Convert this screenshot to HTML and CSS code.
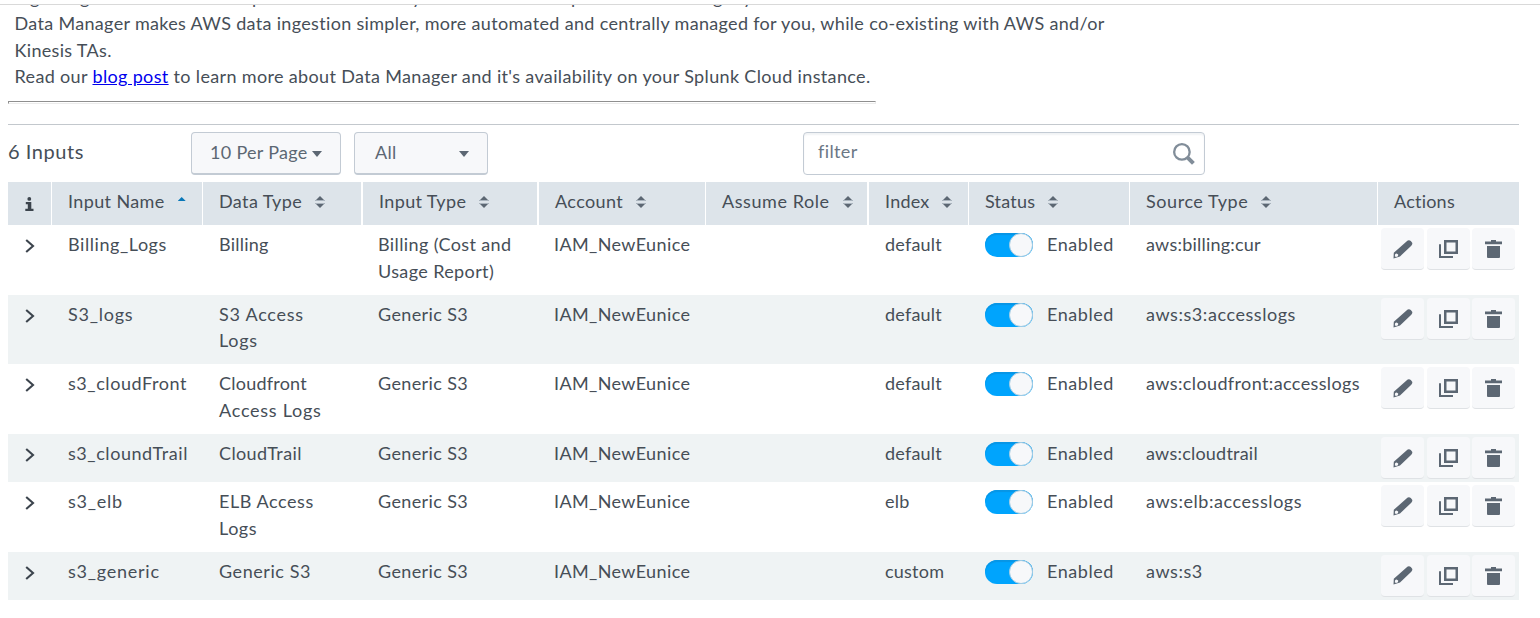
FILE: index.html
```
<!DOCTYPE html>
<html lang="en">
<head>
<meta charset="utf-8">
<title>Inputs</title>
<link rel="stylesheet" href="styles.css">
</head>
<body>
<svg class="defs" aria-hidden="true">
  <symbol id="sort" viewBox="0 0 10 12"><path d="M5 0 9 4H1zM5 12 9 8H1z" fill="#5c6773"/><path d="M0 4.500H10M0 7.500H10" stroke="#a9b3bd"/></symbol>
  <symbol id="chev" viewBox="0 0 10 14"><path d="M1.200 1 8 7 1.200 13" fill="none" stroke="#3c444d" stroke-width="2.100"/></symbol>
  <symbol id="pencil" viewBox="0 0 20 19"><path d="M13.500 1.400C15 .1 16.500-.1 17.800 1.100L18.600 1.900C19.800 3.100 19.500 4.500 18.300 5.800L7 16.400 .5 18.500 .8 12.800ZM2.200 14 1.800 16.200 3 17 5 16.200 5.200 14.400 3.600 13.600Z" fill="#5c6773" fill-rule="evenodd"/></symbol>
  <symbol id="clone" viewBox="0 0 19 18"><path d="M6.250 1.250H17.750V12.750H6.250Z" fill="none" stroke="#5c6773" stroke-width="2.500"/><path d="M1 4.300V17H14" fill="none" stroke="#5c6773" stroke-width="2"/></symbol>
  <symbol id="trash" viewBox="0 0 17 18"><path d="M0 1.600H6V0H11V1.600H17V4.300H0zM2 6H15V17a1 1 0 0 1-1 1H3a1 1 0 0 1-1-1z" fill="#5c6773"/></symbol>
</svg>
<header class="topbar"></header>
<div class="clip" aria-hidden="true"><i>g</i><i>g</i><i>p</i><i>y</i><i>p</i><i>g</i><i>y</i></div>
<main class="page">
  <section class="intro">
    <p class="l1">Data Manager makes AWS data ingestion simpler, more automated and centrally managed for you, while co-existing with AWS and/or</p>
    <p class="l2">Kinesis TAs.</p>
    <p class="l3">Read our <a href="#">blog post</a> to learn more about Data Manager and it's availability on your Splunk Cloud instance.</p>
  </section>
  <div class="rule"></div>
  <div class="toolbar">
    <h2 class="count">6 Inputs</h2>
    <button class="drop per">10 Per Page<i class="caret"></i></button>
    <button class="drop all">All<i class="caret"></i></button>
    <label class="filter"><span>filter</span>
      <svg width="22" height="22" viewBox="0 0 21 21"><circle cx="8.500" cy="8.500" r="7.400" fill="none" stroke="#818d99" stroke-width="2.200"/><path d="M13.300 13.300 19.500 19.500" stroke="#818d99" stroke-width="3.800"/></svg>
    </label>
  </div>
  <div class="table">
    <div class="row head">
      <div class="cell info"><svg width="9" height="14" viewBox="0 0 9 14"><circle cx="4.300" cy="1.900" r="1.900" fill="#3c444d"/><path d="M.8 5H6.300V11.800H8.500V14H.3V11.800H2.800V7.200H.8z" fill="#3c444d"/></svg></div>
      <div class="cell">Input Name<i class="asc"></i></div>
      <div class="cell">Data Type<svg class="sort"><use href="#sort"/></svg></div>
      <div class="cell wide">Input Type<svg class="sort"><use href="#sort"/></svg></div>
      <div class="cell wide">Account<svg class="sort"><use href="#sort"/></svg></div>
      <div class="cell loose">Assume Role<svg class="sort"><use href="#sort"/></svg></div>
      <div class="cell wide tight">Index<svg class="sort"><use href="#sort"/></svg></div>
      <div class="cell tight">Status<svg class="sort"><use href="#sort"/></svg></div>
      <div class="cell loose">Source Type<svg class="sort"><use href="#sort"/></svg></div>
      <div class="cell tight">Actions</div>
    </div>
    <div class="row">
      <div class="cell"><svg class="chev"><use href="#chev"/></svg></div>
      <div class="cell loose">Billing_Logs</div><div class="cell tight">Billing</div><div class="cell nudge">Billing (Cost and<br>Usage Report)</div><div class="cell nudge">IAM_NewEunice</div><div class="cell"></div><div class="cell tight">default</div>
      <div class="cell status loose"><span class="toggle"></span>Enabled</div><div class="cell tight">aws:billing:cur</div>
      <div class="actions"><button><svg class="pencil"><use href="#pencil"/></svg></button><button><svg class="clone"><use href="#clone"/></svg></button><button><svg class="trash"><use href="#trash"/></svg></button></div>
    </div>
    <div class="row alt">
      <div class="cell"><svg class="chev"><use href="#chev"/></svg></div>
      <div class="cell looser">S3_logs</div><div class="cell looser">S3 Access<br>Logs</div><div class="cell nudge">Generic S3</div><div class="cell nudge">IAM_NewEunice</div><div class="cell"></div><div class="cell tight">default</div>
      <div class="cell status loose"><span class="toggle"></span>Enabled</div><div class="cell loose">aws:s3:accesslogs</div>
      <div class="actions"><button><svg class="pencil"><use href="#pencil"/></svg></button><button><svg class="clone"><use href="#clone"/></svg></button><button><svg class="trash"><use href="#trash"/></svg></button></div>
    </div>
    <div class="row">
      <div class="cell"><svg class="chev"><use href="#chev"/></svg></div>
      <div class="cell loose">s3_cloudFront</div><div class="cell"><span class="tight">Cloudfront</span><br><span class="looser">Access Logs</span></div><div class="cell nudge">Generic S3</div><div class="cell nudge">IAM_NewEunice</div><div class="cell"></div><div class="cell tight">default</div>
      <div class="cell status loose"><span class="toggle"></span>Enabled</div><div class="cell">aws:cloudfront:accesslogs</div>
      <div class="actions"><button><svg class="pencil"><use href="#pencil"/></svg></button><button><svg class="clone"><use href="#clone"/></svg></button><button><svg class="trash"><use href="#trash"/></svg></button></div>
    </div>
    <div class="row alt short">
      <div class="cell"><svg class="chev"><use href="#chev"/></svg></div>
      <div class="cell loose">s3_cloundTrail</div><div class="cell">CloudTrail</div><div class="cell nudge">Generic S3</div><div class="cell nudge">IAM_NewEunice</div><div class="cell"></div><div class="cell tight">default</div>
      <div class="cell status loose"><span class="toggle"></span>Enabled</div><div class="cell tight">aws:cloudtrail</div>
      <div class="actions"><button><svg class="pencil"><use href="#pencil"/></svg></button><button><svg class="clone"><use href="#clone"/></svg></button><button><svg class="trash"><use href="#trash"/></svg></button></div>
    </div>
    <div class="row">
      <div class="cell"><svg class="chev"><use href="#chev"/></svg></div>
      <div class="cell looser">s3_elb</div><div class="cell loose">ELB Access<br>Logs</div><div class="cell nudge">Generic S3</div><div class="cell nudge">IAM_NewEunice</div><div class="cell"></div><div class="cell tight">elb</div>
      <div class="cell status loose"><span class="toggle"></span>Enabled</div><div class="cell loose">aws:elb:accesslogs</div>
      <div class="actions"><button><svg class="pencil"><use href="#pencil"/></svg></button><button><svg class="clone"><use href="#clone"/></svg></button><button><svg class="trash"><use href="#trash"/></svg></button></div>
    </div>
    <div class="row alt short">
      <div class="cell"><svg class="chev"><use href="#chev"/></svg></div>
      <div class="cell looser">s3_generic</div><div class="cell loose">Generic S3</div><div class="cell nudge">Generic S3</div><div class="cell nudge">IAM_NewEunice</div><div class="cell"></div><div class="cell tight">custom</div>
      <div class="cell status loose"><span class="toggle"></span>Enabled</div><div class="cell loose">aws:s3</div>
      <div class="actions"><button><svg class="pencil"><use href="#pencil"/></svg></button><button><svg class="clone"><use href="#clone"/></svg></button><button><svg class="trash"><use href="#trash"/></svg></button></div>
    </div>
  </div>
</main>
</body>
</html>
```
FILE: styles.css
```
* { box-sizing: border-box; }
body { margin: 0; width: 1540px; height: 618px; overflow: hidden; background: #fff; color: #464e57; font: 400 18px/26.7px Lato, sans-serif; letter-spacing: .38px; }
p, h2 { margin: 0; }
svg { flex: none; }
.defs { display: none; }
.topbar { height: 5px; border-bottom: 1px solid #d9d9d9; }
.clip { display: grid; grid-template-columns: 50px 172px 160px 159px 142px 30px 20px; height: 5px; padding-left: 30px; overflow: hidden; }
.clip i { margin-top: -21px; font-style: normal; }
.page { padding: 0 21px 0 8px; }
.intro { height: 80px; padding-left: 6.500px; white-space: nowrap; letter-spacing: .325px; line-height: 26.500px; }
.l3 { letter-spacing: .345px; }
.intro a { color: #00e; }
.rule { width: 868px; height: 3px; margin-top: 11px; border: 1px solid; border-color: #8f8f8f #ececec #ececec #8f8f8f; }
.toolbar { display: flex; height: 58px; margin-top: 20px; padding-top: 7px; border-top: 1px solid #c3c8cd; }
.count { width: 183px; font-size: 20px; font-weight: 400; line-height: 38px; letter-spacing: .55px; }
.drop { display: flex; justify-content: space-between; align-items: center; height: 43px; padding: 0 18px 1px; border: 1px solid #c3cbd4; border-bottom-width: 2px; border-radius: 4px; background: #f7f8fa; color: #5c6773; font: inherit; letter-spacing: .3px; }
.per { width: 150px; margin-right: 13px; }
.all { width: 134px; padding-left: 20px; }
.caret { margin-top: 2px; border: 5px solid transparent; border-top: 6px solid #5c6773; border-bottom: 0; }
.filter { display: flex; justify-content: space-between; align-items: center; width: 402px; height: 43px; margin-left: 315px; padding: 0 9px 0 14px; border: 1px solid #c3cbd4; border-radius: 4px; box-shadow: inset 0 2px 2px #f1f3f5; color: #6b7785; }
.filter span { margin-top: -4px; }
.row { display: grid; grid-template-columns: 43px 151px 160px 176px 167px 163px 100px 161px 248px 142px; height: 69.700px; }
.row.alt { background: #eff3f4; }
.row.short { height: 48.200px; }
.cell { padding: 6px 0 0 17px; white-space: nowrap; }
.cell.nudge { padding-left: 16px; }
.row.head { height: 43px; background: #dde4ea; }
.head .cell { display: flex; padding-left: 16px; border-left: 1px solid #fff; }
.head .cell.info { padding: 15px 0 0 17px; border-left: 0; }
.head .cell.wide { box-shadow: -1px 0 #fff; }
.tight { letter-spacing: .22px; }
.loose { letter-spacing: .56px; }
.looser { letter-spacing: .75px; }
.sort { width: 10px; height: 12px; margin: 8px 0 0 13px; }
.asc { width: 8px; height: 4px; margin: 9px 0 0 13px; background: #0877b8; clip-path: polygon(50% 0, 100% 100%, 0 100%); }
.chev { display: block; width: 10px; height: 14px; margin: 8px 0 0 -.5px; }
.status { display: flex; gap: 14px; }
.toggle { flex: none; width: 48px; height: 24px; margin-top: 2px; border-radius: 12px; background: #00a4fd; box-shadow: inset 0 2px 1px #0795e5; }
.toggle::after { content: ""; display: block; width: 22px; height: 22px; margin-left: 24px; border: 1px solid #a3cbe2; border-radius: 50%; background: #f7f8fa; }
.actions { display: grid; grid-template-columns: 43px 43px 43px; column-gap: 2.500px; align-items: start; padding: 3px 0 0 4px; }
.actions button { display: block; height: 42px; padding: 1px 0 0 12px; border: 0; border-bottom: 1px solid #dfe2e5; border-radius: 4px; background: #f7f8fa; }
.actions svg { display: block; }
.pencil { width: 20px; height: 19px; }
.clone { width: 19px; height: 18px; }
.trash { width: 17px; height: 18px; margin-left: 1px; }
```
